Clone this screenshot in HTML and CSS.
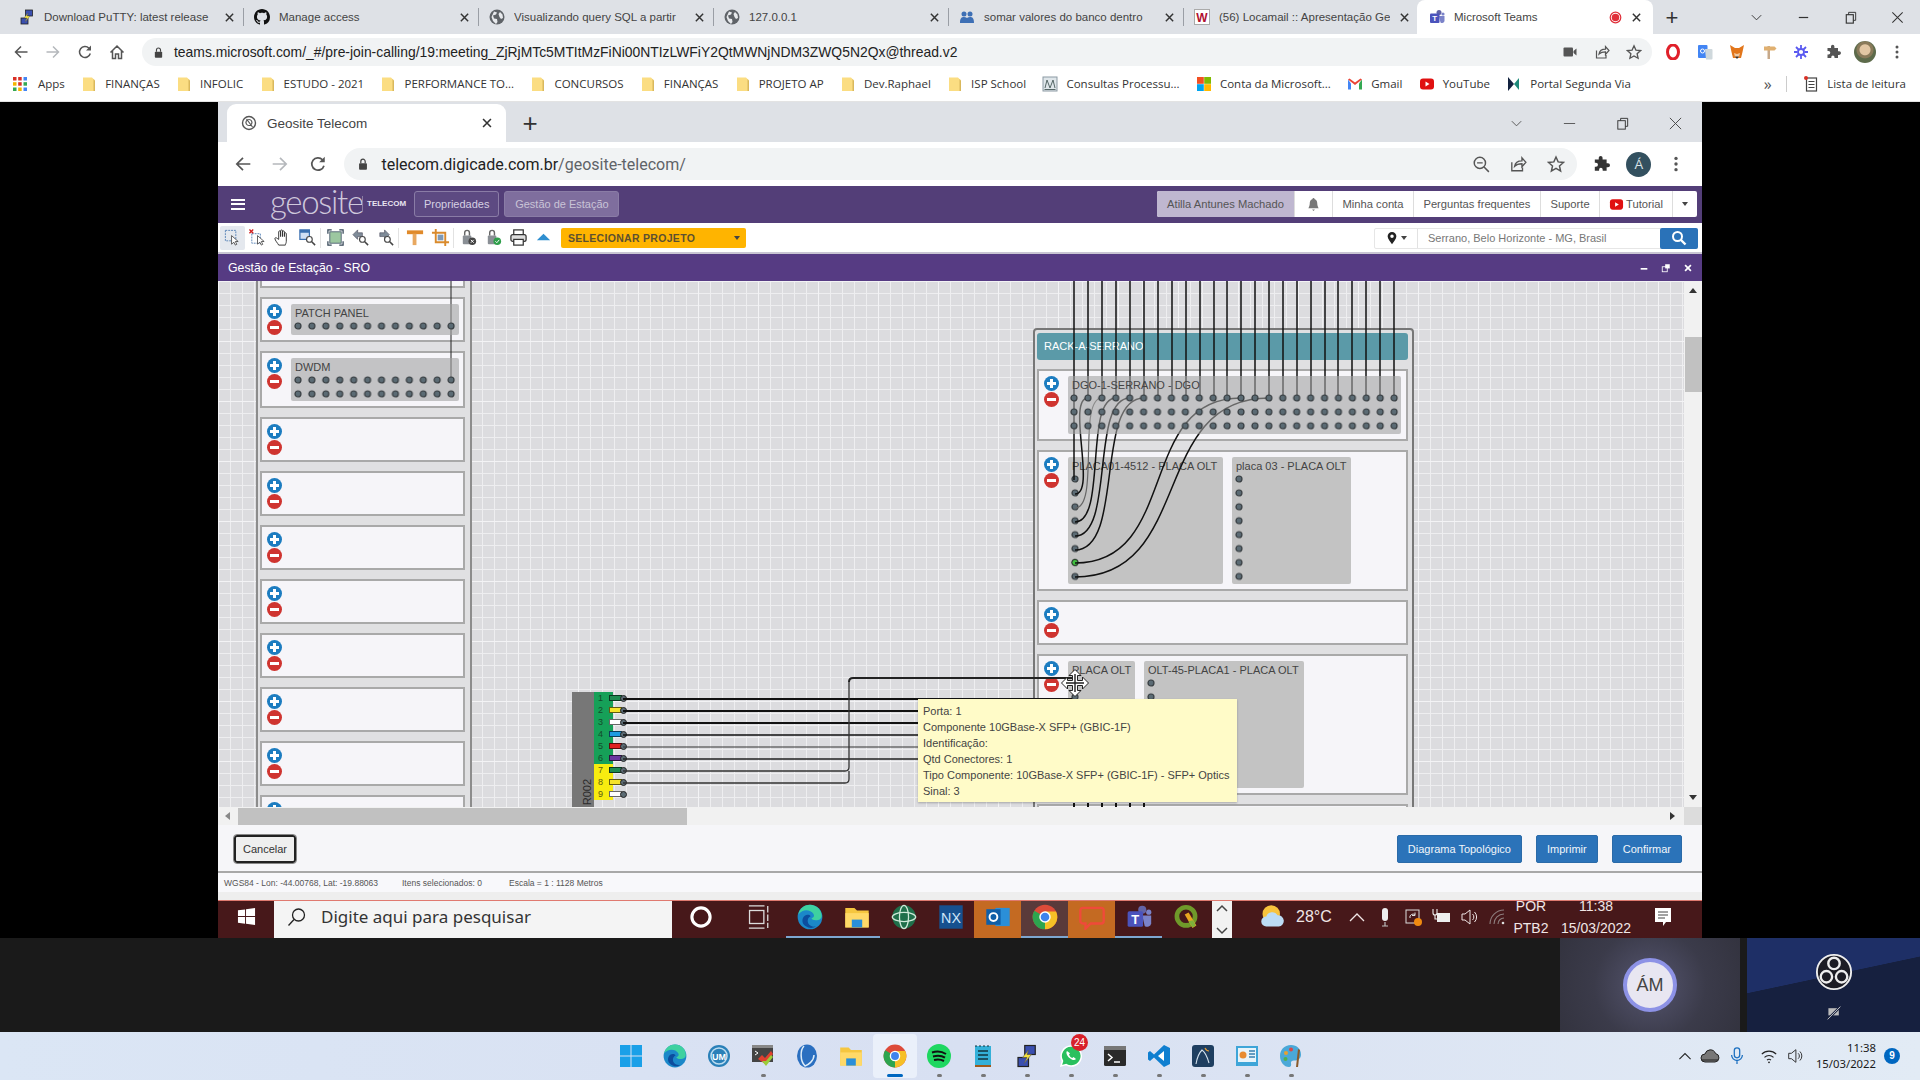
FILE: index.html
```html
<!DOCTYPE html>
<html lang="pt-BR">
<head>
  <meta charset="UTF-8">
  <meta name="viewport" content="width=device-width, initial-scale=1.0">
  <title>Geosite Telecom</title>
  <link rel="stylesheet" href="styles.css">
</head>
<body>
  <!-- pattern das portas: nao pode ficar em svg com display none -->
  <svg class="port-defs" xmlns="http://www.w3.org/2000/svg">
    <defs>
      <pattern id="port" width="13.92" height="13.92" patternUnits="userSpaceOnUse"><circle cx="6.96" cy="6.96" r="3" fill="#5b6b74" stroke="#33393d" stroke-width="1.2"/></pattern>
    </defs>
  </svg>

  <!-- icones -->
  <svg class="sprite" xmlns="http://www.w3.org/2000/svg">
    <symbol id="i-x" viewBox="0 0 16 16"><path d="M3.5 3.5l9 9M12.5 3.5l-9 9" fill="none" stroke="currentColor" stroke-width="1.8"/></symbol>
    <symbol id="i-back" viewBox="0 0 16 16"><path d="M14.5 8H2.5M8 2.5L2.5 8 8 13.5" fill="none" stroke="currentColor" stroke-width="1.5"/></symbol>
    <symbol id="i-fwd" viewBox="0 0 16 16"><path d="M1.5 8h12M8 2.5L13.5 8 8 13.5" fill="none" stroke="currentColor" stroke-width="1.5"/></symbol>
    <symbol id="i-reload" viewBox="0 0 16 16"><path d="M13.3 9.5A5.5 5.5 0 1 1 12 4.2" fill="none" stroke="currentColor" stroke-width="1.5"/><path d="M14 1.5V6.5H9z" fill="currentColor"/></symbol>
    <symbol id="i-home" viewBox="0 0 16 16"><path d="M1.5 8.5L8 2l6.5 6.5M3.5 7v7.5h3V10h3v4.500h3V7" fill="none" stroke="currentColor" stroke-width="1.5"/></symbol>
    <symbol id="i-lock" viewBox="0 0 16 16"><rect x="3.5" y="7" width="9" height="7.5" rx="1" fill="currentColor"/><path d="M5.5 7V5a2.5 2.5 0 0 1 5 0v2" fill="none" stroke="currentColor" stroke-width="1.4"/></symbol>
    <symbol id="i-cam" viewBox="0 0 16 16"><rect x="1.5" y="3.5" width="9.5" height="9" rx="1" fill="currentColor"/><path d="M11.5 7l3-2.5v7l-3-2.5z" fill="currentColor"/></symbol>
    <symbol id="i-share" viewBox="0 0 16 16"><path d="M2.5 6.5V14H12v-3M5 10c.5-3 3-4.800 6.5-4.800V2.500l3.500 4-3.500 4V7.800C8.500 7.800 6.500 8.500 5 10z" fill="none" stroke="currentColor" stroke-width="1.2"/></symbol>
    <symbol id="i-star" viewBox="0 0 16 16"><path d="M8 1.800l1.900 4.300 4.700.5-3.500 3.100 1 4.600L8 11.900l-4.100 2.400 1-4.600-3.500-3.100 4.700-.5z" fill="none" stroke="currentColor" stroke-width="1.3"/></symbol>
    <symbol id="i-puzzle" viewBox="0 0 16 16"><path d="M6 2.500a1.700 1.700 0 0 1 3.400 0V4H13v3.300h1.200a1.800 1.800 0 0 1 0 3.600H13V14H9.500v-1a1.600 1.600 0 0 0-3.200 0v1H2.500v-3.500h1a1.800 1.800 0 0 0 0-3.600h-1V4H6z" fill="currentColor"/></symbol>
    <symbol id="i-dots" viewBox="0 0 16 16"><circle cx="8" cy="3" r="1.5" fill="currentColor"/><circle cx="8" cy="8" r="1.5" fill="currentColor"/><circle cx="8" cy="13" r="1.5" fill="currentColor"/></symbol>
    <symbol id="i-zoomout" viewBox="0 0 16 16"><circle cx="7" cy="7" r="5" fill="none" stroke="currentColor" stroke-width="1.3"/><path d="M10.700 10.700L15 15M4.500 7h5" fill="none" stroke="currentColor" stroke-width="1.3"/></symbol>
    <symbol id="i-globe" viewBox="0 0 16 16"><circle cx="8" cy="8" r="7.5" fill="#5f6368"/><path d="M5 2.500l3 1-1 2-3 1 1 3 3 .5 .5 3-1.500 2L4 12 2.500 8zM11 3l2.500 2.500.5 3.500-2 1-1.500-2L9.500 5z" fill="#e8eaed"/></symbol>
    <symbol id="i-github" viewBox="0 0 16 16"><path d="M8 0C3.580 0 0 3.580 0 8c0 3.540 2.290 6.530 5.470 7.590.4.070.55-.17.55-.38 0-.19-.01-.82-.01-1.490-2.010.37-2.530-.49-2.690-.94-.09-.23-.48-.94-.82-1.130-.28-.15-.68-.52-.01-.53.63-.01 1.080.58 1.230.82.72 1.210 1.870.87 2.330.66.07-.52.28-.87.51-1.070-1.780-.2-3.640-.89-3.640-3.950 0-.87.31-1.590.82-2.150-.08-.2-.36-1.020.08-2.120 0 0 .67-.21 2.200.82.64-.18 1.320-.27 2-.27.68 0 1.360.09 2 .27 1.530-1.040 2.200-.82 2.200-.82.44 1.100.16 1.920.08 2.120.51.56.82 1.270.82 2.150 0 3.070-1.870 3.750-3.650 3.950.29.25.54.73.54 1.480 0 1.070-.01 1.930-.01 2.200 0 .21.15.46.55.38A8.013 8.013 0 0 0 16 8c0-4.420-3.580-8-8-8z" fill="#111"/></symbol>
    <symbol id="i-putty" viewBox="0 0 16 16"><rect x="6.5" y="1" width="7" height="6" fill="#3a4fb0" stroke="#222" stroke-width=".8"/><rect x="2" y="9" width="7" height="6" fill="#3a4fb0" stroke="#222" stroke-width=".8"/><path d="M9 4L5 9h3l-2 4 5-6H8z" fill="#f6e33a" stroke="#555" stroke-width=".4"/></symbol>
    <symbol id="i-people" viewBox="0 0 16 16"><circle cx="5" cy="5" r="2.5" fill="#3d6fb5"/><circle cx="11" cy="5" r="2.5" fill="#3d6fb5"/><path d="M1 14c0-5 1.500-6 4-6 1.200 0 2 .3 3 1 1-.7 1.800-1 3-1 2.500 0 4 1 4 6z" fill="#3d6fb5"/></symbol>
    <symbol id="i-locaweb" viewBox="0 0 16 16"><rect x=".5" y=".5" width="15" height="15" fill="#fff" stroke="#aaa"/><text x="8" y="12.5" font-family="Liberation Sans" font-size="12" font-weight="700" fill="#b01030" text-anchor="middle">W</text></symbol>
    <symbol id="i-teams" viewBox="0 0 16 16"><circle cx="10" cy="3.5" r="2.5" fill="#6264a7"/><circle cx="14" cy="5" r="1.6" fill="#7b83c9"/><path d="M10 7h5.500v5a2.500 2.500 0 0 1-4 1.500z" fill="#7b83c9"/><rect x="1" y="4.5" width="9.5" height="9.5" rx="1" fill="#4b53bc"/><text x="5.7" y="12" font-family="Liberation Sans" font-size="8" font-weight="700" fill="#fff" text-anchor="middle">T</text></symbol>
    <symbol id="i-rec" viewBox="0 0 16 16"><circle cx="8" cy="8" r="6.5" fill="#fff" stroke="#e0303a" stroke-width="1.5"/><circle cx="8" cy="8" r="4.6" fill="#e0303a"/></symbol>
    <symbol id="i-apps" viewBox="0 0 16 16"><g fill="#d93025"><rect x="1" y="1" width="3.5" height="3.5"/><rect x="6.2" y="1" width="3.5" height="3.5"/></g><rect x="11.5" y="1" width="3.5" height="3.5" fill="#4285f4"/><rect x="1" y="6.2" width="3.5" height="3.5" fill="#f4b400"/><rect x="6.2" y="6.2" width="3.5" height="3.5" fill="#d93025"/><rect x="11.5" y="6.2" width="3.5" height="3.5" fill="#34a853"/><rect x="1" y="11.5" width="3.5" height="3.5" fill="#34a853"/><rect x="6.2" y="11.5" width="3.5" height="3.5" fill="#f4b400"/><rect x="11.5" y="11.5" width="3.5" height="3.5" fill="#4285f4"/></symbol>
    <symbol id="i-folder" viewBox="0 0 16 16"><path d="M2 1.500h9l3 3V15H2z" fill="#fbdd82"/><path d="M12.500 3v12H14V4.500z" fill="#d9b85c"/></symbol>
    <symbol id="i-court" viewBox="0 0 16 16"><rect x="1" y="1" width="14" height="14" fill="#dfe6ea" stroke="#8c9aa3"/><path d="M3 12L5 4l3 8 3-8 2 8M2.500 13.500h11" fill="none" stroke="#566"/></symbol>
    <symbol id="i-ms" viewBox="0 0 16 16"><rect x="1" y="1" width="6.8" height="6.8" fill="#f25022"/><rect x="8.2" y="1" width="6.8" height="6.8" fill="#7fba00"/><rect x="1" y="8.2" width="6.8" height="6.8" fill="#00a4ef"/><rect x="8.2" y="8.2" width="6.8" height="6.8" fill="#ffb900"/></symbol>
    <symbol id="i-gmail" viewBox="0 0 16 16"><path d="M1 3.500v10h3V7.500z" fill="#4285f4"/><path d="M12 7.500v6h3v-10z" fill="#34a853"/><path d="M1 3.500L8 9l7-5.500-1.500-1L8 6.500 2.500 2.500z" fill="#ea4335"/></symbol>
    <symbol id="i-yt" viewBox="0 0 16 16"><rect x="1" y="2.5" width="14" height="11" rx="3" fill="#e01010"/><path d="M6.500 5.500v5l4-2.500z" fill="#fff"/></symbol>
    <symbol id="i-portal" viewBox="0 0 16 16"><path d="M2 1l6 7-6 7z" fill="#13223f"/><path d="M8 8l5-6v12z" fill="#1e8a7a"/></symbol>
    <symbol id="i-list" viewBox="0 0 16 16"><rect x="3.5" y="2" width="10" height="13" fill="none" stroke="#444" stroke-width="1.2"/><path d="M5.500 5.500h6M5.500 8.500h6M5.500 11.500h6" stroke="#444"/><circle cx="3" cy="2" r="2" fill="#d93025"/></symbol>
    <symbol id="i-opera" viewBox="0 0 16 16"><ellipse cx="8" cy="8" rx="5.5" ry="7" fill="none" stroke="#e0202a" stroke-width="3"/></symbol>
    <symbol id="i-trans" viewBox="0 0 16 16"><rect x="1" y="1" width="9.5" height="13" rx="1" fill="#4285f4"/><path d="M8 5h6.500a1 1 0 0 1 1 1v8.500a1 1 0 0 1-1 1H9z" fill="#cfd8dc"/><circle cx="5.5" cy="7" r="2" fill="none" stroke="#fff"/></symbol>
    <symbol id="i-fox" viewBox="0 0 16 16"><path d="M1 1l5 3h4l5-3-1.500 7L12 14H4L2.500 8z" fill="#e2761b"/><path d="M5 9l3 1 3-1-1 4H6z" fill="#f2c9a0"/><path d="M6 12.500h4L8 15z" fill="#333"/></symbol>
    <symbol id="i-post" viewBox="0 0 16 16"><rect x="6.5" y="2" width="2.5" height="13" fill="#c7a98a"/><path d="M3 2.500h10.500l2 2-2 2H3z" fill="#e0b070"/></symbol>
    <symbol id="i-burst" viewBox="0 0 16 16"><circle cx="8" cy="8" r="3" fill="none" stroke="#5a5af0" stroke-width="1.8"/><path d="M8 1v3.500M8 11.500V15M1 8h3.500M11.500 8H15M3 3l2.500 2.500M10.500 10.500L13 13M13 3l-2.500 2.500M5.500 10.500L3 13" stroke="#5a5af0" stroke-width="1.8"/></symbol>
    <symbol id="i-bell" viewBox="0 0 16 16"><path d="M8 1a1 1 0 0 1 1 1.200c2.300.6 3 2.600 3 4.800 0 2.500 1 4 1.500 5h-11c.5-1 1.500-2.500 1.500-5 0-2.200.7-4.200 3-4.800A1 1 0 0 1 8 1zM6.500 13.200h3L8 15z" fill="currentColor"/></symbol>
    <symbol id="i-pin" viewBox="0 0 16 16"><path fill-rule="evenodd" d="M8 1a5 5 0 0 1 5 5c0 3-3 6-5 9-2-3-5-6-5-9a5 5 0 0 1 5-5zm0 3a2 2 0 1 0 0 4 2 2 0 0 0 0-4z" fill="currentColor"/></symbol>
    <symbol id="i-search" viewBox="0 0 16 16"><circle cx="6.5" cy="6.5" r="4.5" fill="none" stroke="currentColor" stroke-width="2"/><path d="M10 10l4.500 4.500" stroke="currentColor" stroke-width="2.4"/></symbol>
    <symbol id="i-geo" viewBox="0 0 16 16"><circle cx="8" cy="8" r="6.5" fill="none" stroke="#555" stroke-width="1.4"/><path d="M5.500 4l6 8M8 4.500a3 3 0 1 1-.1 0" fill="none" stroke="#555" stroke-width="1.2"/></symbol>

    <symbol id="t-select" viewBox="0 0 20 20"><rect x="2.5" y="2.5" width="11" height="11" fill="none" stroke="#5b86b8" stroke-dasharray="2 1"/><path d="M9 8v9l2.500-2 1.500 3 1.500-.8-1.500-3h3z" fill="#fff" stroke="#333" stroke-width=".8"/></symbol>
    <symbol id="t-unselect" viewBox="0 0 20 20"><rect x="4" y="6" width="9" height="10" fill="none" stroke="#5b86b8" stroke-dasharray="2 1"/><path d="M1.500 1.500l4 4M5.500 1.500l-4 4" stroke="#d02020" stroke-width="1.4"/><path d="M10 8v9l2.500-2 1.500 3 1.500-.8-1.500-3h3z" fill="#fff" stroke="#333" stroke-width=".8"/></symbol>
    <symbol id="t-hand" viewBox="0 0 20 20"><path d="M6 18c-1-2-4-5-4-7 0-1 1.500-1 2.500 0L6 12V4c0-1.300 2-1.300 2 0v5-6c0-1.300 2-1.300 2 0v6-5c0-1.300 2-1.300 2 0v5-3c0-1.300 2-1.300 2 0v8c0 2-1 3-1 4z" fill="#fff" stroke="#333"/></symbol>
    <symbol id="t-zoomrect" viewBox="0 0 20 20"><rect x="2" y="2" width="10" height="10" fill="#cfe0f5" stroke="#3a70b0" stroke-width="1.3"/><rect x="2" y="2" width="10" height="3" fill="#3a70b0"/><circle cx="12" cy="12" r="3" fill="#fff" stroke="#444" stroke-width="1.2"/><path d="M14.500 14.500l3.500 3.500" stroke="#444" stroke-width="1.6"/></symbol>
    <symbol id="t-extent" viewBox="0 0 20 20"><rect x="4" y="4" width="12" height="12" fill="#9cc7a0" stroke="#567"/><path d="M2 6V2h4M14 2h4v4M18 14v4h-4M6 18H2v-4" fill="none" stroke="#345" stroke-width="1.3"/></symbol>
    <symbol id="t-prev" viewBox="0 0 20 20"><path d="M2 7l5-5v3h5v4H7v3z" fill="#7f8c99" stroke="#445" stroke-width=".6"/><circle cx="12" cy="12" r="3" fill="#fff" stroke="#444" stroke-width="1.2"/><path d="M14.500 14.500l3.500 3.500" stroke="#444" stroke-width="1.6"/></symbol>
    <symbol id="t-next" viewBox="0 0 20 20"><path d="M14 7L9 2v3H4v4h5v3z" fill="#7f8c99" stroke="#445" stroke-width=".6"/><circle cx="12" cy="12" r="3" fill="#fff" stroke="#444" stroke-width="1.2"/><path d="M14.500 14.500l3.500 3.500" stroke="#444" stroke-width="1.6"/></symbol>
    <symbol id="t-post" viewBox="0 0 20 20"><rect x="1" y="2.5" width="17" height="4" fill="#e08a2a"/><rect x="7" y="6" width="4" height="12" fill="#e8a860"/></symbol>
    <symbol id="t-crop" viewBox="0 0 20 20"><path d="M5 1v14h14M1 5h14v14" fill="none" stroke="#d98a2c" stroke-width="2"/><rect x="7" y="7" width="6" height="6" fill="#7f99b5"/></symbol>
    <symbol id="t-lockx" viewBox="0 0 20 20"><rect x="4" y="8" width="9" height="9" rx="1" fill="#8a8f95"/><path d="M6 8V5a2.500 2.500 0 0 1 5 0v3" fill="none" stroke="#666" stroke-width="1.5"/><circle cx="14" cy="14" r="4" fill="#444"/><path d="M12.500 12.500l3 3M15.500 12.500l-3 3" stroke="#fff"/></symbol>
    <symbol id="t-lockok" viewBox="0 0 20 20"><rect x="4" y="8" width="9" height="9" rx="1" fill="#8a8f95"/><path d="M6 8V5a2.500 2.500 0 0 1 5 0v3" fill="none" stroke="#666" stroke-width="1.5"/><circle cx="14" cy="14" r="4" fill="#2e9e4a"/><path d="M12 14l1.500 1.500 2.500-3" fill="none" stroke="#fff"/></symbol>
    <symbol id="t-print" viewBox="0 0 20 20"><rect x="5" y="2" width="10" height="5" fill="#fff" stroke="#333" stroke-width="1.3"/><rect x="2" y="7" width="16" height="7" rx="2" fill="#ddd" stroke="#333" stroke-width="1.3"/><rect x="5" y="12" width="10" height="6" fill="#fff" stroke="#333" stroke-width="1.3"/></symbol>
    <symbol id="t-up" viewBox="0 0 20 20"><path d="M10 6l7 7H3z" fill="#2f8fd0"/></symbol>

    <symbol id="w-logo" viewBox="0 0 20 20"><path d="M1 3.500l7.500-1V9.500H1zM9.500 2.300L19 1v8.500H9.500zM1 10.500h7.500v7L1 16.500zM9.500 10.500H19V19l-9.500-1.300z" fill="currentColor"/></symbol>
    <symbol id="w-glass" viewBox="0 0 20 20"><circle cx="11.5" cy="8" r="6" fill="none" stroke="#222" stroke-width="1.3"/><path d="M7 12.500L1.500 18.500" stroke="#222" stroke-width="1.3"/></symbol>
    <symbol id="w-cortana" viewBox="0 0 20 20"><circle cx="10" cy="10" r="7" fill="none" stroke="#fff" stroke-width="2.4"/></symbol>
    <symbol id="w-task" viewBox="0 0 20 20"><path d="M3 1.500h12M3 18.500h12" stroke="#ddd"/><rect x="3.5" y="5" width="11" height="10" fill="none" stroke="#ddd"/><path d="M17.500 1.500v5M17.500 8v5M17.500 14.500v4" stroke="#ddd"/></symbol>
    <symbol id="w-edge" viewBox="0 0 20 20"><circle cx="10" cy="10" r="9.5" fill="#1b88c9"/><path d="M1 8C2 3 6 .5 10 .5c5 0 9 4 9 8.500 0 2.500-2 3.500-4.500 3.500-2 0-3-.6-3.400-1.500 2-.5 2.500-2 1.500-3.500C11 5 7 4 4 5.500 2.700 6.200 1.700 7 1 8z" fill="#3ed1a0"/><path d="M6.500 17c-3-2-3-6-.5-8 1.500-1 3.500-1 4.500.5-2.500 1-3 4.500-1 6.500 1.200 1.200 3 1.800 5 1.200-2.500 2-5.500 1.500-8-.2z" fill="#0c4d9e"/></symbol>
    <symbol id="w-files" viewBox="0 0 20 20"><path d="M1 3h7l2 2h9v13H1z" fill="#f5c63f"/><rect x="1" y="7" width="18" height="11" fill="#ffd968"/><rect x="6" y="12" width="8" height="6" fill="#2a8fd8"/></symbol>
    <symbol id="w-globe2" viewBox="0 0 20 20"><circle cx="10" cy="10" r="9" fill="#1f6f4a"/><ellipse cx="10" cy="10" rx="9" ry="3.5" fill="none" stroke="#cfe8d8"/><ellipse cx="10" cy="10" rx="3.5" ry="9" fill="none" stroke="#cfe8d8"/></symbol>
    <symbol id="w-nx" viewBox="0 0 20 20"><rect x="1" y="1" width="18" height="18" fill="#16508f"/><text x="10" y="14.5" font-family="Liberation Sans" font-size="11" fill="#cfe6fa" text-anchor="middle">NX</text></symbol>
    <symbol id="w-outlook" viewBox="0 0 20 20"><rect x="8" y="3" width="11" height="14" fill="#2b8fd8"/><rect x="1" y="4" width="11" height="12" fill="#0f5fa8"/><circle cx="6.5" cy="10" r="3" fill="none" stroke="#fff" stroke-width="1.5"/></symbol>
    <symbol id="w-chrome" viewBox="0 0 20 20"><circle cx="10" cy="10" r="9.5" fill="#dd4b39"/><path d="M10 10L1.800 5.200A9.500 9.500 0 0 0 10 19.500z" fill="#2da54f"/><path d="M10 10v9.500A9.500 9.500 0 0 0 18.500 5.800H10z" fill="#f6c026"/><circle cx="10" cy="10" r="4.4" fill="#fff"/><circle cx="10" cy="10" r="3.3" fill="#3f83ec"/></symbol>
    <symbol id="w-chat" viewBox="0 0 20 20"><path d="M3 3h14a2 2 0 0 1 2 2v8a2 2 0 0 1-2 2H9l-4 4v-4H3a2 2 0 0 1-2-2V5a2 2 0 0 1 2-2z" fill="none" stroke="#ef4a3a" stroke-width="1.8"/></symbol>
    <symbol id="w-qgis" viewBox="0 0 20 20"><circle cx="10" cy="9.5" r="7" fill="none" stroke="#6f9a2a" stroke-width="3.6"/><path d="M9 8l3-1.500 6 10-3 2z" fill="#e8a620"/><path d="M12 13l3 5 2.500-1.500-2-4z" fill="#7fb03a"/></symbol>
    <symbol id="w-cloud" viewBox="0 0 20 20"><circle cx="9" cy="8" r="7" fill="#f7c33d"/><path d="M5 18a4 4 0 0 1 0-8 5 5 0 0 1 9-1 4.500 4.500 0 0 1 1 9z" fill="#bcdcf5"/></symbol>
    <symbol id="w-caret" viewBox="0 0 20 20"><path d="M3 14l7-7 7 7" fill="none" stroke="currentColor" stroke-width="1.3"/></symbol>
    <symbol id="w-mic" viewBox="0 0 20 20"><rect x="7" y="1" width="6" height="13" rx="3" fill="#eee"/><path d="M10 15v4M7 19h6" stroke="#bbb" stroke-width="1.2"/></symbol>
    <symbol id="w-sync" viewBox="0 0 20 20"><rect x="3" y="3" width="13" height="13" fill="none" stroke="#ddd"/><path d="M7 11a3 3 0 0 1 5-3M12 5.500v3H9" fill="none" stroke="#ddd"/><circle cx="15" cy="15" r="4" fill="#f08a10"/></symbol>
    <symbol id="w-power" viewBox="0 0 20 20"><rect x="6" y="6" width="13" height="9" fill="#eee"/><path d="M2 2v4a2 2 0 0 0 4 0V2M4 8v4h3" fill="none" stroke="#eee" stroke-width="1.1"/></symbol>
    <symbol id="w-vol" viewBox="0 0 20 20"><path d="M3 7h3l5-4v14l-5-4H3z" fill="none" stroke="currentColor"/><path d="M13.500 7a4 4 0 0 1 0 6M15.500 5a7 7 0 0 1 0 10" fill="none" stroke="currentColor"/></symbol>
    <symbol id="w-wifi" viewBox="0 0 20 20"><path d="M2 8a11 11 0 0 1 16 0M5 11.500a7 7 0 0 1 10 0M7.800 14.500a3 3 0 0 1 4.400 0" fill="none" stroke="currentColor" stroke-width="1.2"/><circle cx="10" cy="17" r="1" fill="currentColor"/></symbol>
    <symbol id="w-dim" viewBox="0 0 20 20"><path d="M3 17a14 14 0 0 1 14-14M7 17a10 10 0 0 1 10-10M11 17a6 6 0 0 1 6-6" fill="none" stroke="#8d7d7d" stroke-width="1.1"/><circle cx="16" cy="16" r="1.3" fill="#ddd"/></symbol>
    <symbol id="w-note" viewBox="0 0 20 20"><path d="M2 1h16v14h-5l-3 4v-4H2z" fill="#fff"/><path d="M5 5h10M5 8h10M5 11h7" stroke="#444"/></symbol>

    <symbol id="a-start" viewBox="0 0 24 24"><path d="M1 1h10.500v10.500H1zM12.500 1H23v10.500H12.500zM1 12.500h10.500V23H1zM12.500 12.500H23V23H12.500z" fill="#1aa0e8"/></symbol>
    <symbol id="a-um" viewBox="0 0 24 24"><circle cx="12" cy="12" r="11" fill="#2a80b8"/><circle cx="12" cy="12" r="8" fill="none" stroke="#bcdcf0" stroke-width="1.5"/><text x="12" y="15.5" font-family="Liberation Sans" font-size="9" font-weight="700" fill="#fff" text-anchor="middle">UM</text></symbol>
    <symbol id="a-cmdc" viewBox="0 0 24 24"><rect x="1" y="1" width="21" height="17" fill="#444"/><rect x="1" y="1" width="21" height="3" fill="#888"/><path d="M4 7l3 2-3 2" fill="none" stroke="#fff"/><path d="M7 15l4-4 3 3 6-7 2 3-8 10z" fill="#e04030"/><path d="M11 17l4 5 7-9-2-2-5 6z" fill="#9ccc3a"/></symbol>
    <symbol id="a-wbox" viewBox="0 0 24 24"><ellipse cx="12" cy="12" rx="10" ry="11.5" fill="#2a6fc0"/><path d="M9 2C5 6 5 17 10 22c3-1 9-5 9-11" fill="none" stroke="#dcecf8" stroke-width="1.5"/></symbol>
    <symbol id="a-spot" viewBox="0 0 24 24"><circle cx="12" cy="12" r="12" fill="#1ed760"/><path d="M5 8.500c5-1.500 10-1 14 1.500M6 12.500c4-1 9-.7 12 1.200M7 16c3.500-.8 7-.6 10 1" fill="none" stroke="#111" stroke-width="2"/></symbol>
    <symbol id="a-notes" viewBox="0 0 24 24"><rect x="4" y="2" width="16" height="20" fill="#34b0d8"/><path d="M7 7h10M7 11h10M7 15h10" stroke="#12343f" stroke-width="1.5"/><path d="M5 1v2M9 1v2M13 1v2M17 1v2" stroke="#12343f"/><rect x="4" y="21" width="16" height="2" fill="#a05a1a"/></symbol>
    <symbol id="a-wapp" viewBox="0 0 24 24"><path d="M12 2a10 10 0 0 0-8.500 15L2 22l5.200-1.400A10 10 0 1 0 12 2z" fill="#29c05e" stroke="#fff" stroke-width="1.5"/><path d="M8 7c-1.500 1.500 0 5 2.500 7s5 3 6.500 1l-2.500-2-1.200 1c-1.500-.5-2.800-2-3.300-3.500l1-1.200z" fill="#fff"/></symbol>
    <symbol id="a-term" viewBox="0 0 24 24"><rect x="1" y="2" width="22" height="20" rx="1.5" fill="#2a2a2a"/><rect x="1" y="2" width="22" height="4" fill="#777"/><path d="M5 10l4 3.500-4 3.500" fill="none" stroke="#fff" stroke-width="1.5"/><path d="M11 18h6" stroke="#fff" stroke-width="1.5"/></symbol>
    <symbol id="a-vscode" viewBox="0 0 24 24"><path d="M17 1l6 3v16l-6 3-10-9.500L3 17l-2-1.500v-7L3 7l4 3.500z" fill="#0f7fd0"/><path d="M17 7l-6 5 6 5z" fill="#fff"/></symbol>
    <symbol id="a-mysql" viewBox="0 0 24 24"><rect x="1" y="1" width="22" height="22" rx="3" fill="#1f3f60"/><path d="M5 20c1-6 2-10 6-14 3 2 5 6 7 13" fill="none" stroke="#d4e2ee" stroke-width="1.1"/><path d="M14 4c1 2 3 3 4 3" fill="none" stroke="#f0a030" stroke-width="1.2"/></symbol>
    <symbol id="a-chart" viewBox="0 0 24 24"><rect x="1" y="2" width="22" height="20" fill="#3ea5d8"/><rect x="3" y="4" width="18" height="14" fill="#e8f4fa"/><circle cx="8" cy="11" r="3.5" fill="#e88c30"/><path d="M14 7h6M14 10h6M14 13h6" stroke="#3a7fb0" stroke-width="1.5"/></symbol>
    <symbol id="a-paint" viewBox="0 0 24 24"><path d="M12 1C5 1 1 6 1 12c0 6 4 11 9 11 2 0 2.500-2 2-3.500-.5-2 1-3 3-3 4 0 7-2 7-6C22 5 18 1 12 1z" fill="#4aa8d8"/><circle cx="7" cy="9" r="2" fill="#e8a030"/><circle cx="12" cy="5.500" r="2" fill="#d84848"/><circle cx="6.500" cy="15" r="2" fill="#50b050"/><path d="M19 5l2 1-2 17h-2z" fill="#8a5a2a"/></symbol>
    <symbol id="a-cloud" viewBox="0 0 20 20"><path d="M5 16a4 4 0 0 1 0-8 5.500 5.500 0 0 1 10.500-.5A4.300 4.300 0 0 1 15 16z" fill="#777" stroke="#222"/><path d="M2 14h16" stroke="#222"/></symbol>
    <symbol id="a-mic" viewBox="0 0 20 20"><rect x="7" y="1" width="6" height="11" rx="3" fill="none" stroke="#1b6fc0" stroke-width="1.4"/><path d="M4 9a6 6 0 0 0 12 0M10 15v4" fill="none" stroke="#1b6fc0" stroke-width="1.4"/></symbol>
  </svg>

  <div class="tabs">
    <div class="tab"><svg class="ico"><use href="#i-putty"/></svg><span class="tab-title">Download PuTTY: latest release</span><svg class="tab-x"><use href="#i-x"/></svg></div>
    <div class="tab"><svg class="ico"><use href="#i-github"/></svg><span class="tab-title">Manage access</span><svg class="tab-x"><use href="#i-x"/></svg></div>
    <div class="tab"><svg class="ico"><use href="#i-globe"/></svg><span class="tab-title">Visualizando query SQL a partir</span><svg class="tab-x"><use href="#i-x"/></svg></div>
    <div class="tab"><svg class="ico"><use href="#i-globe"/></svg><span class="tab-title">127.0.0.1</span><svg class="tab-x"><use href="#i-x"/></svg></div>
    <div class="tab"><svg class="ico"><use href="#i-people"/></svg><span class="tab-title">somar valores do banco dentro</span><svg class="tab-x"><use href="#i-x"/></svg></div>
    <div class="tab tab-last"><svg class="ico"><use href="#i-locaweb"/></svg><span class="tab-title">(56) Locamail :: Apresentação Ge</span><svg class="tab-x"><use href="#i-x"/></svg></div>
    <div class="tab tab-on"><svg class="ico"><use href="#i-teams"/></svg><span class="tab-title">Microsoft Teams</span><svg class="ico tab-rec"><use href="#i-rec"/></svg><svg class="tab-x"><use href="#i-x"/></svg></div>
    <span class="tab-plus">+</span>
    <div class="win-ctl">
      <svg viewBox="0 0 16 16"><path d="M3 5.500l5 5 5-5" fill="none" stroke="#333"/></svg>
      <svg viewBox="0 0 16 16"><path d="M3 8h10" stroke="#333" stroke-width="1.3"/></svg>
      <svg viewBox="0 0 16 16"><rect x="3.5" y="5" width="7.5" height="9" fill="none" stroke="#333" stroke-width="1.2"/><path d="M6 5V2.500h7.500V11H11" fill="none" stroke="#333"/></svg>
      <svg viewBox="0 0 16 16"><path d="M2.500 2.500l11 11M13.500 2.500l-11 11" stroke="#333" stroke-width="1.1"/></svg>
    </div>
  </div>

  <div class="toolbar">
    <div class="nav-btn"><svg><use href="#i-back"/></svg></div>
    <div class="nav-btn nav-off"><svg><use href="#i-fwd"/></svg></div>
    <div class="nav-btn"><svg><use href="#i-reload"/></svg></div>
    <div class="nav-btn"><svg><use href="#i-home"/></svg></div>
    <div class="omni">
      <svg class="ico omni-lock"><use href="#i-lock"/></svg>
      <span class="omni-url">teams.microsoft.com/_#/pre-join-calling/19:meeting_ZjRjMTc5MTItMzFiNi00NTIzLWFiY2QtMWNjNDM3ZWQ5N2Qx@thread.v2</span>
      <div class="nav-btn"><svg><use href="#i-cam"/></svg></div>
      <div class="nav-btn"><svg><use href="#i-share"/></svg></div>
      <div class="nav-btn"><svg><use href="#i-star"/></svg></div>
    </div>
    <div class="ext-list">
      <div class="nav-btn"><svg><use href="#i-opera"/></svg></div>
      <div class="nav-btn"><svg><use href="#i-trans"/></svg></div>
      <div class="nav-btn"><svg><use href="#i-fox"/></svg></div>
      <div class="nav-btn"><svg><use href="#i-post"/></svg></div>
      <div class="nav-btn"><svg><use href="#i-burst"/></svg></div>
      <div class="nav-btn"><svg><use href="#i-puzzle"/></svg></div>
      <div class="nav-btn"><span class="avatar-photo"></span></div>
      <div class="nav-btn"><svg><use href="#i-dots"/></svg></div>
    </div>
  </div>

  <div class="bookmarks">
    <a class="bm bm-apps"><svg class="ico"><use href="#i-apps"/></svg>Apps</a>
    <a class="bm"><svg class="ico"><use href="#i-folder"/></svg>FINANÇAS</a>
    <a class="bm"><svg class="ico"><use href="#i-folder"/></svg>INFOLIC</a>
    <a class="bm"><svg class="ico"><use href="#i-folder"/></svg>ESTUDO - 2021</a>
    <a class="bm"><svg class="ico"><use href="#i-folder"/></svg>PERFORMANCE TO...</a>
    <a class="bm"><svg class="ico"><use href="#i-folder"/></svg>CONCURSOS</a>
    <a class="bm"><svg class="ico"><use href="#i-folder"/></svg>FINANÇAS</a>
    <a class="bm"><svg class="ico"><use href="#i-folder"/></svg>PROJETO AP</a>
    <a class="bm"><svg class="ico"><use href="#i-folder"/></svg>Dev.Raphael</a>
    <a class="bm"><svg class="ico"><use href="#i-folder"/></svg>ISP School</a>
    <a class="bm"><svg class="ico"><use href="#i-court"/></svg>Consultas Processu...</a>
    <a class="bm"><svg class="ico"><use href="#i-ms"/></svg>Conta da Microsoft...</a>
    <a class="bm"><svg class="ico"><use href="#i-gmail"/></svg>Gmail</a>
    <a class="bm"><svg class="ico"><use href="#i-yt"/></svg>YouTube</a>
    <a class="bm"><svg class="ico"><use href="#i-portal"/></svg>Portal Segunda Via</a>
    <span class="bm-more">»</span>
    <a class="bm bm-list"><svg class="ico"><use href="#i-list"/></svg>Lista de leitura</a>
  </div>

  <div class="desk">
    <div class="window">
      <div class="wtabs">
        <div class="wtab"><svg class="ico"><use href="#i-geo"/></svg><span class="wtab-title">Geosite Telecom</span><svg class="wtab-x"><use href="#i-x"/></svg></div>
        <span class="wtab-plus">+</span>
        <div class="win-ctl win-ctl-in">
          <svg viewBox="0 0 16 16"><path d="M3 5.500l5 5 5-5" fill="none" stroke="#555"/></svg>
          <svg viewBox="0 0 16 16"><path d="M2 8h12" stroke="#555"/></svg>
          <svg viewBox="0 0 16 16"><rect x="3" y="5" width="8" height="9" fill="none" stroke="#333"/><path d="M6 5V2.500h7.500V11H11" fill="none" stroke="#333"/></svg>
          <svg viewBox="0 0 16 16"><path d="M2 2l12 12M14 2L2 14" stroke="#444"/></svg>
        </div>
      </div>
      <div class="wbar">
        <div class="wnav"><svg><use href="#i-back"/></svg></div>
        <div class="wnav wnav-off"><svg><use href="#i-fwd"/></svg></div>
        <div class="wnav"><svg><use href="#i-reload"/></svg></div>
        <div class="womni">
          <svg class="ico womni-lock"><use href="#i-lock"/></svg>
          <span class="womni-url">telecom.digicade.com.br<span class="womni-path">/geosite-telecom/</span></span>
          <div class="wnav"><svg><use href="#i-zoomout"/></svg></div>
          <div class="wnav"><svg><use href="#i-share"/></svg></div>
          <div class="wnav"><svg><use href="#i-star"/></svg></div>
        </div>
        <div class="wnav wnav-dark"><svg><use href="#i-puzzle"/></svg></div>
        <div class="wnav"><span class="avatar">Á</span></div>
        <div class="wnav"><svg><use href="#i-dots"/></svg></div>
      </div>

      <header class="app-head">
        <span class="burger"></span>
        <span class="logo">geosite</span>
        <span class="logo-sub">TELECOM</span>
        <button class="head-btn">Propriedades</button>
        <button class="head-btn head-btn-on">Gestão de Estação</button>
        <nav class="head-menu">
          <span class="hm hm-user">Atilla Antunes Machado</span>
          <span class="hm hm-bell"><svg class="ico"><use href="#i-bell"/></svg></span>
          <span class="hm">Minha conta</span>
          <span class="hm">Perguntas frequentes</span>
          <span class="hm">Suporte</span>
          <span class="hm hm-tut"><svg class="ico"><use href="#i-yt"/></svg>Tutorial</span>
          <span class="hm hm-caret"><i class="caret"></i></span>
        </nav>
      </header>

      <div class="tools">
        <span class="tool tool-on"><svg><use href="#t-select"/></svg></span>
        <span class="tool"><svg><use href="#t-unselect"/></svg></span>
        <span class="tool"><svg><use href="#t-hand"/></svg></span>
        <span class="tool"><svg><use href="#t-zoomrect"/></svg></span>
        <span class="tool-sep"></span>
        <span class="tool"><svg><use href="#t-extent"/></svg></span>
        <span class="tool"><svg><use href="#t-prev"/></svg></span>
        <span class="tool"><svg><use href="#t-next"/></svg></span>
        <span class="tool-sep tool-sep-w"></span>
        <span class="tool"><svg><use href="#t-post"/></svg></span>
        <span class="tool"><svg><use href="#t-crop"/></svg></span>
        <span class="tool-sep"></span>
        <span class="tool"><svg><use href="#t-lockx"/></svg></span>
        <span class="tool"><svg><use href="#t-lockok"/></svg></span>
        <span class="tool"><svg><use href="#t-print"/></svg></span>
        <span class="tool"><svg><use href="#t-up"/></svg></span>
        <button class="project">SELECIONAR PROJETO<i class="caret"></i></button>
        <div class="finder">
          <span class="finder-pin"><svg class="ico"><use href="#i-pin"/></svg><i class="caret"></i></span>
          <span class="finder-text">Serrano, Belo Horizonte - MG, Brasil</span>
          <span class="finder-go"><svg class="ico"><use href="#i-search"/></svg></span>
        </div>
      </div>

      <div class="titlebar">
        <span>Gestão de Estação - SRO</span>
        <div class="titlebar-ctl">
          <svg viewBox="0 0 12 12"><path d="M2 7h8" stroke="#fff" stroke-width="2"/></svg>
          <svg viewBox="0 0 12 12"><rect x="1.5" y="4.5" width="6" height="6" fill="none" stroke="#fff"/><rect x="5" y="1.5" width="5.5" height="5" fill="#fff"/></svg>
          <svg viewBox="0 0 12 12"><path d="M2.500 2.500l7 7M9.500 2.500l-7 7" stroke="#fff" stroke-width="2"/></svg>
        </div>
      </div>

      <div class="pane">
        <div class="canvas">
          <!-- rack da esquerda -->
          <div class="rack rack-left">
            <div class="unit"><div class="ctl"><i class="btn-add"></i><i class="btn-del"></i></div></div>
            <div class="unit"><div class="ctl"><i class="btn-add"></i><i class="btn-del"></i></div>
              <div class="card card-glass"><div class="card-label">PATCH PANEL</div><svg class="ports" width="168" height="14"><rect width="168" height="14" fill="url(#port)"/></svg></div>
            </div>
            <div class="unit unit-dwdm"><div class="ctl"><i class="btn-add"></i><i class="btn-del"></i></div>
              <div class="card card-glass"><div class="card-label">DWDM</div><svg class="ports" width="168" height="28"><rect width="168" height="28" fill="url(#port)"/></svg></div>
            </div>
            <div class="unit"><div class="ctl"><i class="btn-add"></i><i class="btn-del"></i></div></div>
            <div class="unit"><div class="ctl"><i class="btn-add"></i><i class="btn-del"></i></div></div>
            <div class="unit"><div class="ctl"><i class="btn-add"></i><i class="btn-del"></i></div></div>
            <div class="unit"><div class="ctl"><i class="btn-add"></i><i class="btn-del"></i></div></div>
            <div class="unit"><div class="ctl"><i class="btn-add"></i><i class="btn-del"></i></div></div>
            <div class="unit"><div class="ctl"><i class="btn-add"></i><i class="btn-del"></i></div></div>
            <div class="unit"><div class="ctl"><i class="btn-add"></i><i class="btn-del"></i></div></div>
            <div class="unit"><div class="ctl"><i class="btn-add"></i><i class="btn-del"></i></div></div>
          </div>

          <!-- rack da direita -->
          <div class="rack rack-right">
            <div class="rack-title">RACK-A-SERRANO</div>
            <div class="unit unit-dgo"><div class="ctl"><i class="btn-add"></i><i class="btn-del"></i></div>
              <div class="card card-glass card-dgo"><div class="card-label">DGO-1-SERRANO - DGO</div><svg class="ports ports-dgo" width="334" height="42"><rect width="334" height="42" fill="url(#port)"/></svg></div>
            </div>
            <div class="unit unit-olt"><div class="ctl"><i class="btn-add"></i><i class="btn-del"></i></div>
              <div class="card card-a"><div class="card-label">PLACA01-4512 - PLACA OLT</div><svg class="ports" width="14" height="112"><rect width="14" height="112" fill="url(#port)"/><circle cx="6.96" cy="90.48" r="3" fill="#3fc03f" stroke="#2a3a2a"/></svg></div>
              <div class="card card-b"><div class="card-label">placa 03 - PLACA OLT</div><svg class="ports" width="14" height="112"><rect width="14" height="112" fill="url(#port)"/></svg></div>
            </div>
            <div class="unit"><div class="ctl"><i class="btn-add"></i><i class="btn-del"></i></div></div>
            <div class="unit unit-olt"><div class="ctl"><i class="btn-add"></i><i class="btn-del"></i></div>
              <div class="card card-c"><div class="card-label">PLACA OLT</div><svg class="ports" width="14" height="112"><rect width="14" height="112" fill="url(#port)"/></svg></div>
              <div class="card card-d"><div class="card-label">OLT-45-PLACA1 - PLACA OLT</div><svg class="ports" width="14" height="112"><rect width="14" height="112" fill="url(#port)"/></svg></div>
            </div>
            <div class="unit"></div>
          </div>

          <!-- DIO -->
          <div class="dio">
            <div class="dio-name"><span>R002</span></div>
            <div class="dio-rows">
              <div class="dio-row"><span class="dio-num">1</span><i class="conn c-green"></i><i class="conn-dot"></i></div>
              <div class="dio-row"><span class="dio-num">2</span><i class="conn c-yellow"></i><i class="conn-dot"></i></div>
              <div class="dio-row"><span class="dio-num">3</span><i class="conn c-white"></i><i class="conn-dot"></i></div>
              <div class="dio-row"><span class="dio-num">4</span><i class="conn c-blue"></i><i class="conn-dot"></i></div>
              <div class="dio-row"><span class="dio-num">5</span><i class="conn c-red"></i><i class="conn-dot"></i></div>
              <div class="dio-row"><span class="dio-num">6</span><i class="conn c-purple"></i><i class="conn-dot"></i></div>
              <div class="dio-row dio-row-y"><span class="dio-num">7</span><i class="conn c-green"></i><i class="conn-dot"></i></div>
              <div class="dio-row dio-row-y"><span class="dio-num">8</span><i class="conn c-yellow"></i><i class="conn-dot"></i></div>
              <div class="dio-row dio-row-y"><span class="dio-num">9</span><i class="conn c-white"></i><i class="conn-dot"></i></div>
            </div>
          </div>

          <!-- cabos -->
          <svg class="wires" viewBox="218 281 1466 526">
            <g fill="none" stroke="#111" stroke-width="1.5">
              <path d="M451 281V379" stroke="#222" stroke-width="1"/>
              <path d="M1074 281V480"/>
              <path d="M1088 281V398"/><path d="M1102 281V398"/><path d="M1116 281V398"/><path d="M1130 281V398"/><path d="M1144 281V398"/>
              <path d="M1158 281V398"/><path d="M1172 281V398"/><path d="M1186 281V398"/><path d="M1200 281V398"/><path d="M1214 281V398"/><path d="M1227 281V398"/>
              <path d="M1241 281V398"/><path d="M1255 281V398"/><path d="M1269 281V398"/><path d="M1283 281V398"/><path d="M1297 281V398"/><path d="M1311 281V398"/>
              <path d="M1325 281V398"/><path d="M1338 281V398"/><path d="M1352 281V398"/><path d="M1366 281V398"/><path d="M1380 281V398"/><path d="M1394 281V398"/>
              <path d="M1075 494C1097 494 1066 398 1088 398"/>
              <path d="M1075 508C1100 508 1077 398 1102 398" stroke="#666" stroke-width="1.2"/>
              <path d="M1075 522C1107 522 1084 398 1116 398"/>
              <path d="M1075 536C1115 536 1090 398 1130 398"/>
              <path d="M1075 550C1125 550 1094 398 1144 398"/>
              <path d="M1075 563C1180 563 1136 398 1241 398"/>
              <path d="M1075 577C1195 577 1149 398 1269 398"/>
              <path d="M623 699H1072" stroke-width="2"/>
              <path d="M623 711H920" stroke-width="2"/>
              <path d="M623 723H920" stroke-width="2"/>
              <path d="M623 735H920"/>
              <path d="M623 747H920" stroke="#333" stroke-width="1.2"/>
              <path d="M623 759H920" stroke="#222"/>
              <path d="M623 771H845q4 0 4-4V682" stroke="#333" stroke-width="1.3"/>
              <path d="M623 783H845q4 0 4-4V771" stroke="#333" stroke-width="1.3"/>
              <path d="M849 682q0-4 4-4H1072" stroke="#222" stroke-width="2"/>
              <path d="M1074 803V807M1088 803V807M1102 803V807M1116 803V807M1130 803V807M1144 803V807" stroke-width="2"/>
            </g>
          </svg>

          <div class="tip">
            <div>Porta: 1</div>
            <div>Componente 10GBase-X SFP+ (GBIC-1F)</div>
            <div>Identificação:</div>
            <div>Qtd Conectores: 1</div>
            <div>Tipo Componente: 10GBase-X SFP+ (GBIC-1F) - SFP+ Optics</div>
            <div>Sinal: 3</div>
          </div>

          <svg class="cursor" viewBox="0 0 28 28"><path d="M14 .5L20 6.500H16.500V11.500H21.500V8L27.500 14 21.500 20V16.500H16.500V21.500H20L14 27.500 8 21.500H11.500V16.500H6.500V20L.5 14 6.500 8V11.500H11.500V6.500H8z" fill="#fff" stroke="#222"/><path d="M14 5v18M5 14h18" stroke="#222" stroke-width="1.4"/></svg>
        </div>

        <div class="vbar"><i class="arr arr-up"></i><div class="vthumb"></div><i class="arr arr-down"></i></div>
        <div class="hbar"><i class="arr arr-left"></i><div class="hthumb"></div><i class="arr arr-right"></i></div>
        <div class="corner"></div>
      </div>

      <footer class="foot">
        <button class="btn-cancel">Cancelar</button>
        <button class="btn-blue btn-first">Diagrama Topológico</button>
        <button class="btn-blue">Imprimir</button>
        <button class="btn-blue">Confirmar</button>
      </footer>
      <div class="status">
        <span class="st-a">WGS84 - Lon: -44.00768, Lat: -19.88063</span>
        <span class="st-b">Itens selecionados: 0</span>
        <span>Escala = 1 : 1128 Metros</span>
      </div>
      <div class="strip"></div>

      <div class="w10">
        <span class="w10-start"><svg><use href="#w-logo"/></svg></span>
        <div class="w10-search"><svg><use href="#w-glass"/></svg><span>Digite aqui para pesquisar</span></div>
        <span class="w10-app w10-wide"><svg><use href="#w-cortana"/></svg></span>
        <span class="w10-app w10-wide"><svg><use href="#w-task"/></svg></span>
        <span class="w10-app w10-open"><svg><use href="#w-edge"/></svg></span>
        <span class="w10-app w10-open"><svg><use href="#w-files"/></svg></span>
        <span class="w10-app"><svg><use href="#w-globe2"/></svg></span>
        <span class="w10-app"><svg><use href="#w-nx"/></svg></span>
        <span class="w10-app w10-hot"><svg><use href="#w-outlook"/></svg></span>
        <span class="w10-app w10-on w10-open"><svg><use href="#w-chrome"/></svg></span>
        <span class="w10-app w10-hot"><svg><use href="#w-chat"/></svg></span>
        <span class="w10-app w10-open"><svg><use href="#i-teams"/></svg></span>
        <span class="w10-app"><svg><use href="#w-qgis"/></svg></span>
        <div class="w10-scroll"><svg viewBox="0 0 16 16"><path d="M3 10l5-5 5 5" fill="none" stroke="#444" stroke-width="1.5"/></svg><svg viewBox="0 0 16 16"><path d="M3 6l5 5 5-5" fill="none" stroke="#444" stroke-width="1.5"/></svg></div>
        <span class="w10-weather"><svg><use href="#w-cloud"/></svg></span>
        <span class="w10-temp">28°C</span>
        <span class="w10-tray"><svg><use href="#w-caret"/></svg></span>
        <span class="w10-tray"><svg><use href="#w-mic"/></svg></span>
        <span class="w10-tray"><svg><use href="#w-sync"/></svg></span>
        <span class="w10-tray"><svg><use href="#w-power"/></svg></span>
        <span class="w10-tray"><svg><use href="#w-vol"/></svg></span>
        <span class="w10-tray"><svg><use href="#w-dim"/></svg></span>
        <div class="w10-lang"><span>POR</span><span>PTB2</span></div>
        <div class="w10-clock"><span>11:38</span><span>15/03/2022</span></div>
        <span class="w10-note"><svg><use href="#w-note"/></svg></span>
      </div>
    </div>
  </div>

  <div class="band">
    <div class="tile-am"><span class="am-ring">ÁM</span></div>
    <div class="tile-obs">
      <svg class="obs-logo" viewBox="0 0 40 40"><circle cx="20" cy="20" r="18" fill="#1c1c24" stroke="#eee" stroke-width="2"/><circle cx="20" cy="11" r="6" fill="none" stroke="#eee" stroke-width="2.5"/><circle cx="12" cy="25" r="6" fill="none" stroke="#eee" stroke-width="2.5"/><circle cx="28" cy="25" r="6" fill="none" stroke="#eee" stroke-width="2.5"/></svg>
      <svg class="obs-mute" viewBox="0 0 20 20"><rect x="3" y="4" width="13" height="9" fill="#bbb"/><path d="M2 18L18 2" stroke="#1b2340" stroke-width="3"/><path d="M2 18L18 2" stroke="#ddd"/></svg>
    </div>
  </div>

  <div class="w11">
    <div class="w11-apps">
      <span class="app"><svg><use href="#a-start"/></svg></span>
      <span class="app"><svg><use href="#w-edge"/></svg></span>
      <span class="app"><svg><use href="#a-um"/></svg></span>
      <span class="app app-run"><svg><use href="#a-cmdc"/></svg></span>
      <span class="app"><svg><use href="#a-wbox"/></svg></span>
      <span class="app"><svg><use href="#w-files"/></svg></span>
      <span class="app app-on"><svg><use href="#w-chrome"/></svg></span>
      <span class="app app-run"><svg><use href="#a-spot"/></svg></span>
      <span class="app app-run"><svg><use href="#a-notes"/></svg></span>
      <span class="app app-run"><svg><use href="#i-putty"/></svg></span>
      <span class="app app-run"><svg><use href="#a-wapp"/></svg><b class="app-badge">24</b></span>
      <span class="app app-run"><svg><use href="#a-term"/></svg></span>
      <span class="app app-run"><svg><use href="#a-vscode"/></svg></span>
      <span class="app app-run"><svg><use href="#a-mysql"/></svg></span>
      <span class="app app-run"><svg><use href="#a-chart"/></svg></span>
      <span class="app app-run"><svg><use href="#a-paint"/></svg></span>
    </div>
    <div class="w11-tray">
      <svg class="t-caret"><use href="#w-caret"/></svg>
      <svg class="t-cloud"><use href="#a-cloud"/></svg>
      <svg class="t-mic"><use href="#a-mic"/></svg>
      <svg class="t-wifi"><use href="#w-wifi"/></svg>
      <svg class="t-vol"><use href="#w-vol"/></svg>
      <div class="w11-clock"><span>11:38</span><span>15/03/2022</span></div>
      <span class="w11-badge">9</span>
    </div>
  </div>
</body>
</html>
```

FILE: styles.css
```css
* {
  box-sizing: border-box;
}

body {
  margin: 0;
  width: 1920px;
  height: 1080px;
  overflow: hidden;
  display: flex;
  flex-direction: column;
  font-family: "Liberation Sans", Arial, sans-serif;
  background-color: #000;
}

svg {
  display: block;
}

.sprite {
  display: none;
}

.port-defs {
  position: absolute;
  width: 0;
  height: 0;
}

.ico {
  width: 16px;
  height: 16px;
  flex: none;
}

button {
  font-family: inherit;
  cursor: default;
}

/* chrome de fora */
.tabs {
  height: 34px;
  flex: none;
  display: flex;
  align-items: flex-end;
  padding-left: 9px;
  background-color: #dee1e6;
}

.tab {
  width: 235px;
  height: 34px;
  flex: none;
  display: flex;
  align-items: center;
  padding: 0 8px 0 10px;
  font-size: 11.5px;
  color: #444;
  position: relative;
}

.tab::after {
  content: "";
  position: absolute;
  right: 0;
  top: 8px;
  bottom: 8px;
  width: 1px;
  background-color: #9a9ea5;
}

.tab-last::after,
.tab-on::after {
  display: none;
}

.tab-on {
  width: 236px;
  margin-left: -2px;
  padding: 0 10px 0 12px;
  background-color: #fff;
  border-radius: 8px 8px 0 0;
}

.tab-title {
  flex: 1;
  margin-left: 9px;
  overflow: hidden;
  white-space: nowrap;
}

.tab-x {
  width: 13px;
  height: 13px;
  flex: none;
  margin-left: 8px;
  color: #333;
}

.tab-rec {
  width: 13px;
  height: 13px;
}

.tab-plus {
  width: 38px;
  text-align: center;
  font-size: 22px;
  line-height: 32px;
  color: #333;
}

.win-ctl {
  margin-left: auto;
  height: 34px;
  display: flex;
  align-items: center;
  gap: 32px;
  padding-right: 15px;
}

.win-ctl svg {
  width: 15px;
  height: 15px;
}

.toolbar {
  height: 36px;
  flex: none;
  display: flex;
  align-items: center;
  padding-left: 5px;
  background-color: #fff;
}

.nav-btn {
  width: 32px;
  height: 28px;
  flex: none;
  display: flex;
  align-items: center;
  justify-content: center;
  color: #555;
}

.nav-btn svg {
  width: 16px;
  height: 16px;
}

.nav-off {
  color: #b5b8bc;
}

.omni {
  width: 1510px;
  height: 28px;
  margin-left: 9px;
  display: flex;
  align-items: center;
  padding: 0 2px 0 10px;
  border-radius: 14px;
  background-color: #f1f3f4;
}

.omni-lock {
  width: 13px;
  height: 13px;
  color: #444;
}

.omni-url {
  flex: 1;
  margin-left: 9px;
  font-size: 13.9px;
  color: #222;
  white-space: nowrap;
}

.ext-list {
  display: flex;
  margin-left: 5px;
}

.avatar-photo {
  width: 22px;
  height: 22px;
  border-radius: 50%;
  background: radial-gradient(circle at 50% 40%, #e2c7a4 0 5px, #8a7a5a 6px 8px, #5d6b4b 9px);
}

.bookmarks {
  height: 32px;
  flex: none;
  display: flex;
  align-items: center;
  gap: 16.3px;
  padding: 0 0 4px 12px;
  font-family: "Open Sans", "Liberation Sans", sans-serif;
  font-size: 11.5px;
  color: #333;
  background-color: #fff;
  border-bottom: 1px solid #e3e3e3;
}

.bm {
  display: flex;
  align-items: center;
  gap: 8px;
  white-space: nowrap;
}

.bm-apps {
  gap: 10px;
}

.bm-more {
  margin-left: auto;
  width: 23px;
  font-size: 16px;
  line-height: 16px;
  color: #555;
  border-right: 1px solid #ccc;
}

.bm-list {
  margin-right: 14px;
}

/* janela de dentro */
.desk {
  height: 836px;
  flex: none;
  padding-left: 218px;
  background-color: #000;
}

.window {
  width: 1484px;
  height: 836px;
  display: flex;
  flex-direction: column;
  background-color: #fff;
}

.wtabs {
  height: 40px;
  flex: none;
  display: flex;
  align-items: flex-end;
  padding-left: 9px;
  background-color: #dee1e6;
}

.wtab {
  width: 279px;
  height: 38px;
  display: flex;
  align-items: center;
  padding: 0 12px 0 14px;
  font-size: 13.5px;
  color: #444;
  border-radius: 9px 9px 0 0;
  background-color: #fff;
}

.wtab-title {
  flex: 1;
  margin-left: 10px;
}

.wtab-x {
  width: 14px;
  height: 14px;
  color: #333;
}

.wtab-plus {
  width: 48px;
  text-align: center;
  font-size: 26px;
  line-height: 38px;
  color: #333;
}

.win-ctl-in {
  height: 38px;
  gap: 38px;
  padding-right: 19px;
}

.wbar {
  height: 44px;
  flex: none;
  display: flex;
  align-items: center;
  padding-left: 6px;
  background-color: #fff;
}

.wnav {
  width: 37.5px;
  height: 32px;
  flex: none;
  display: flex;
  align-items: center;
  justify-content: center;
  color: #555;
}

.wnav svg {
  width: 18px;
  height: 18px;
}

.wnav-off {
  color: #b5b8bc;
}

.wnav-dark {
  color: #333;
}

.womni {
  width: 1233px;
  height: 32px;
  margin: 0 6px 0 7px;
  display: flex;
  align-items: center;
  padding: 0 2px 0 12px;
  border-radius: 16px;
  background-color: #f1f3f4;
}

.womni-lock {
  width: 14px;
  height: 14px;
  color: #444;
}

.womni-url {
  flex: 1;
  margin-left: 12px;
  font-family: Roboto, "Liberation Sans", sans-serif;
  font-size: 16px;
  color: #222;
}

.womni-path {
  color: #5f6368;
}

.avatar {
  width: 25px;
  height: 25px;
  border-radius: 50%;
  text-align: center;
  font-size: 13px;
  line-height: 25px;
  color: #dce4e8;
  background-color: #33505f;
}

/* sistema */
.app-head {
  height: 37px;
  flex: none;
  display: flex;
  align-items: center;
  padding: 0 0 1px 13px;
  background-color: #533e78;
}

.burger {
  width: 14px;
  height: 11px;
  border-top: 2px solid #fff;
  border-bottom: 2px solid #fff;
  position: relative;
}

.burger::after {
  content: "";
  position: absolute;
  left: 0;
  right: 0;
  top: 2.5px;
  height: 2px;
  background-color: #fff;
}

.logo {
  margin: -6px 0 0 25px;
  width: 92px;
  font-family: Lato, "Liberation Sans", sans-serif;
  font-weight: 300;
  font-size: 33px;
  line-height: 30px;
  letter-spacing: -1.3px;
  color: #cfc8dc;
}

.logo-sub {
  width: 52px;
  height: 16px;
  padding-left: 4px;
  font-size: 8px;
  font-weight: 700;
  line-height: 16px;
  color: #e8e4f0;
  border-left: 1px solid #8a7da3;
}

.head-btn {
  height: 26px;
  margin-right: 5px;
  padding: 0 9px;
  font-size: 11px;
  color: #d6d0e2;
  border: 1px solid #8a7ca6;
  border-radius: 3px;
  background-color: #5d4a82;
}

.head-btn-on {
  width: 115px;
  padding: 0;
  white-space: nowrap;
  color: #c9c3d6;
  background-color: #7f6e9e;
}

.head-menu {
  margin-left: auto;
  margin-right: 5px;
  height: 26px;
  display: flex;
  border-radius: 2px;
  overflow: hidden;
  background-color: #fff;
  font-size: 11.2px;
  color: #555;
}

.hm {
  display: flex;
  align-items: center;
  padding: 0 9.5px;
  white-space: nowrap;
  border-left: 1px solid #ddd;
}

.hm-user {
  padding: 0 10px;
  border-left: 0;
  background-color: #bfb7d0;
}

.hm-bell {
  padding: 0 11px;
  color: #777;
}

.hm-bell .ico,
.hm-tut .ico {
  width: 15px;
  height: 15px;
}

.hm-tut {
  gap: 2px;
  padding: 0 9px;
}

.hm-caret {
  padding: 0 9px;
}

.caret {
  display: inline-block;
  width: 0;
  height: 0;
  border-left: 3.5px solid transparent;
  border-right: 3.5px solid transparent;
  border-top: 4px solid #444;
}

.tools {
  height: 31px;
  flex: none;
  display: flex;
  align-items: center;
  padding-left: 2px;
  background-color: #fff;
  border-bottom: 2px solid #c9c5d3;
}

.tool {
  width: 25px;
  height: 24px;
  flex: none;
  display: flex;
  align-items: center;
  justify-content: center;
}

.tool svg {
  width: 19px;
  height: 19px;
}

.tool-on {
  background-color: #e4e8ee;
  border-radius: 2px;
}

.tool-sep {
  width: 3px;
  height: 20px;
  flex: none;
  border-left: 1px solid #e2e2e2;
}

.tool-sep-w {
  width: 5px;
}

.project {
  width: 185px;
  height: 20px;
  margin-left: 5px;
  display: flex;
  align-items: center;
  justify-content: space-between;
  padding: 0 6px 0 7px;
  font-size: 10.5px;
  font-weight: 700;
  letter-spacing: 0.3px;
  color: #5d5030;
  border: 0;
  border-radius: 2px;
  background-color: #ffb400;
}

.finder {
  margin: 1px 4px 0 auto;
  width: 324px;
  height: 21px;
  display: flex;
  align-items: center;
  font-size: 11px;
  color: #777;
  border: 1px solid #e6e6e6;
  border-radius: 2px;
}

.finder-pin {
  width: 43px;
  height: 19px;
  display: flex;
  align-items: center;
  justify-content: center;
  gap: 2px;
  color: #222;
  border-right: 1px solid #e2e2e2;
}

.finder-pin .ico {
  width: 14px;
  height: 14px;
}

.finder-text {
  flex: 1;
  padding-left: 10px;
  white-space: nowrap;
}

.finder-go {
  width: 38px;
  height: 21px;
  margin-right: -1px;
  display: flex;
  align-items: center;
  justify-content: center;
  color: #fff;
  background-color: #2a72b8;
  border-radius: 2px;
}

.titlebar {
  height: 27px;
  flex: none;
  display: flex;
  align-items: center;
  justify-content: space-between;
  padding: 0 9px 0 10px;
  font-size: 12.3px;
  color: #fff;
  background-color: #563b83;
}

.titlebar-ctl {
  display: flex;
  gap: 12px;
}

.titlebar-ctl svg {
  width: 10px;
  height: 10px;
}

/* area do diagrama */
.pane {
  height: 544px;
  flex: none;
  display: grid;
  grid-template-columns: 1fr 18px;
  grid-template-rows: 1fr 18px;
}

.canvas {
  position: relative;
  overflow: hidden;
  background-color: #dcdcdf;
  background-image:
    linear-gradient(#f3f3f5 1px, transparent 1px),
    linear-gradient(90deg, #f3f3f5 1px, transparent 1px),
    linear-gradient(#eeeef0 1px, transparent 1px),
    linear-gradient(90deg, #eeeef0 1px, transparent 1px);
  background-size: 60px 60px, 60px 60px, 12px 12px, 12px 12px;
}

.rack {
  position: absolute;
  display: flex;
  flex-direction: column;
  gap: 9px;
  padding: 2px 5px 2px 2px;
  background-color: #e0e0e2;
  border: 2px solid #8c8c8c;
}

.rack-left {
  left: 38px;
  top: -42px;
  width: 216px;
}

.rack-right {
  left: 815px;
  top: 47px;
  width: 381px;
  padding-top: 3px;
  padding-right: 4px;
  border-color: #777;
  border-radius: 4px;
}

.rack-title {
  height: 27px;
  flex: none;
  padding-left: 7px;
  font-size: 11px;
  line-height: 27px;
  color: #fff;
  border-radius: 3px;
  background-color: #5b9aa8;
}

.unit {
  height: 45px;
  flex: none;
  display: flex;
  gap: 9px;
  padding: 5px;
  background-color: #f6f5f9;
  border: 2px solid #a9a9a9;
}

.unit-dwdm {
  height: 57px;
}

.unit-dgo {
  height: 72px;
}

.unit-olt {
  height: 141px;
}

.ctl {
  width: 15px;
  flex: none;
  display: flex;
  flex-direction: column;
  gap: 1px;
}

.btn-add,
.btn-del {
  width: 15px;
  height: 15px;
  flex: none;
  border-radius: 50%;
  position: relative;
  background-color: #1c7cc0;
}

.btn-del {
  background-color: #cf3430;
}

.btn-add::before,
.btn-del::before {
  content: "";
  position: absolute;
  left: 3px;
  right: 3px;
  top: 6px;
  height: 3px;
  background-color: #fff;
}

.btn-add::after {
  content: "";
  position: absolute;
  top: 3px;
  bottom: 3px;
  left: 6px;
  width: 3px;
  background-color: #fff;
}

.card {
  flex: none;
  padding-top: 3px;
  border-radius: 2px;
  background-color: #c3c3c3;
}

/* fica por cima dos cabos */
.card-glass {
  position: relative;
  z-index: 3;
  width: 168px;
  background-color: rgba(161, 161, 161, 0.6);
}

.card-dgo {
  width: 333px;
}

.ports-dgo {
  margin-left: -1px;
}

.card-a {
  width: 155px;
  height: 127px;
}

.card-b {
  width: 119px;
  height: 127px;
}

.card-c {
  width: 67px;
  height: 127px;
}

.card-d {
  width: 160px;
  height: 127px;
}

.card-label {
  height: 12px;
  padding-left: 4px;
  font-size: 11px;
  line-height: 12px;
  white-space: nowrap;
  color: #444;
}

.dio {
  position: absolute;
  left: 354px;
  top: 411px;
  width: 55px;
  display: flex;
}

.dio-name {
  width: 22px;
  height: 120px;
  background-color: #777;
  font-size: 11px;
  color: #2a2a2a;
}

.dio-name span {
  display: block;
  margin: 87px 0 0 9px;
  writing-mode: vertical-rl;
  transform: rotate(180deg);
}

.dio-rows {
  flex: 1;
}

.dio-row {
  height: 12px;
  display: flex;
  align-items: center;
}

.dio-num {
  width: 19px;
  height: 12px;
  flex: none;
  padding-left: 4px;
  font-size: 9px;
  line-height: 12px;
  color: #144a2a;
  background-color: #16a058;
}

.dio-row-y .dio-num {
  color: #5a5a10;
  background-color: #f7ec10;
}

.conn {
  width: 13px;
  height: 6px;
  flex: none;
  margin-left: -4px;
  border: 1px solid rgba(0, 0, 0, 0.6);
}

.c-green {
  background-color: #1d8a50;
}

.c-yellow {
  background-color: #f5e32a;
}

.c-white {
  background-color: #fff;
}

.c-blue {
  background-color: #1f9be0;
}

.c-red {
  background-color: #e02020;
}

.c-purple {
  background-color: #6a35a0;
}

.conn-dot {
  width: 7px;
  height: 7px;
  flex: none;
  margin-left: -2px;
  position: relative;
  z-index: 1;
  border-radius: 50%;
  background-color: #5b6b74;
  border: 1px solid #222;
}

.wires {
  position: absolute;
  left: 0;
  top: 0;
  width: 1466px;
  height: 526px;
  z-index: 2;
  pointer-events: none;
}

.tip {
  position: absolute;
  left: 700px;
  top: 418px;
  width: 319px;
  height: 103px;
  z-index: 5;
  padding: 4px 5px;
  font-size: 11px;
  line-height: 16px;
  white-space: nowrap;
  color: #444;
  background-color: #fffbc8;
  box-shadow: 0 1px 2px rgba(0, 0, 0, 0.25);
}

.cursor {
  position: absolute;
  left: 843px;
  top: 388px;
  width: 28px;
  height: 28px;
  z-index: 6;
}

.vbar,
.hbar {
  background-color: #f1f1f1;
  display: flex;
  align-items: center;
}

.vbar {
  flex-direction: column;
}

.hbar {
  padding-right: 2px;
}

.corner {
  background-color: #dcdcdc;
}

.arr {
  flex: none;
  width: 0;
  height: 0;
  border-style: solid;
  border-color: transparent;
}

.arr-up {
  margin-top: 7px;
  border-width: 0 4px 5px;
  border-bottom-color: #333;
}

.arr-down {
  margin-top: auto;
  margin-bottom: 7px;
  border-width: 5px 4px 0;
  border-top-color: #333;
}

.arr-left {
  margin-left: 7px;
  border-width: 4px 5px 4px 0;
  border-right-color: #888;
}

.arr-right {
  margin-left: auto;
  margin-right: 7px;
  border-width: 4px 0 4px 5px;
  border-left-color: #333;
}

.vthumb {
  width: 17px;
  height: 55px;
  margin-top: 44px;
  background-color: #c1c1c1;
}

.hthumb {
  width: 449px;
  height: 17px;
  margin-left: 8px;
  background-color: #c1c1c1;
}

.foot {
  height: 48px;
  flex: none;
  display: flex;
  align-items: center;
  gap: 14px;
  padding: 0 20px 0 16px;
  background-color: #f6f6f9;
  border-bottom: 2px solid #a8a8a8;
}

.btn-cancel {
  width: 62px;
  height: 28px;
  margin-top: 1px;
  font-size: 11px;
  color: #333;
  border: 2px solid #222;
  outline: 1px solid #888;
  border-radius: 3px;
  background-color: #efefef;
}

.btn-blue {
  height: 28px;
  margin-top: 1px;
  padding: 0 10px;
  font-size: 11px;
  color: #f2f6fa;
  border: 1px solid #2a6aa8;
  border-radius: 2px;
  background-color: #2b73b9;
}

.btn-first {
  margin-left: auto;
}

.status {
  height: 19px;
  flex: none;
  display: flex;
  align-items: center;
  padding-left: 6px;
  font-size: 8.5px;
  color: #555;
  background-color: #f8f8fb;
}

.st-a {
  width: 178px;
}

.st-b {
  width: 107px;
}

.strip {
  height: 8px;
  flex: none;
  background-color: #eeeeee;
}

/* barra do windows gravado */
.w10 {
  height: 38px;
  flex: none;
  display: flex;
  align-items: center;
  color: #f0e6e6;
  background-color: #47181a;
  border-top: 1px solid #e07a70;
}

/* a barra esta cortada embaixo, o conteudo fica mais para cima */
.w10-start,
.w10-search,
.w10-app,
.w10-weather,
.w10-temp,
.w10-tray,
.w10-note {
  height: 37px;
  padding-bottom: 6px;
  display: flex;
  align-items: center;
}

.w10-start {
  width: 56px;
  flex: none;
  justify-content: center;
  color: #fff;
}

.w10-start svg {
  width: 19px;
  height: 19px;
}

.w10-search {
  width: 398px;
  flex: none;
  padding-left: 13px;
  gap: 14px;
  font-family: "Noto Sans", sans-serif;
  font-size: 17px;
  color: #333;
  background-color: #f4f4f4;
}

.w10-search svg {
  width: 20px;
  height: 20px;
}

.w10-app {
  width: 47px;
  flex: none;
  justify-content: center;
}

.w10-app svg {
  width: 26px;
  height: 26px;
}

.w10-wide {
  width: 57px;
}

.w10-open {
  box-shadow: inset 0 -2px 0 #7da6d0;
}

.w10-hot {
  background-color: #c46a22;
}

.w10-on {
  background-color: #5a3a3a;
}

.w10-scroll {
  width: 20px;
  height: 37px;
  margin-left: 3px;
  flex: none;
  display: flex;
  flex-direction: column;
  justify-content: space-between;
  background-color: #f2f2f2;
}

.w10-scroll svg {
  width: 20px;
  height: 16px;
}

.w10-weather {
  margin-left: 28px;
}

.w10-weather svg {
  width: 25px;
  height: 27px;
}

.w10-temp {
  width: 47px;
  margin-left: 11px;
  font-size: 16px;
}

.w10-tray {
  width: 28px;
  flex: none;
  justify-content: center;
}

.w10-tray svg {
  width: 20px;
  height: 20px;
}

.w10-lang,
.w10-clock {
  height: 37px;
  flex: none;
  display: flex;
  flex-direction: column;
  align-items: center;
  justify-content: space-between;
  font-size: 14px;
  line-height: 16px;
  overflow: hidden;
}

.w10-lang span:first-child,
.w10-clock span:first-child {
  margin-top: -3px;
}

.w10-lang span:last-child,
.w10-clock span:last-child {
  margin-bottom: 2px;
}

.w10-lang {
  width: 40px;
}

.w10-clock {
  width: 90px;
}

.w10-note {
  margin-left: 12px;
}

.w10-note svg {
  width: 20px;
  height: 24px;
}

/* faixa da chamada */
.band {
  height: 94px;
  flex: none;
  display: flex;
  justify-content: flex-end;
  gap: 7px;
  background-color: #1a1a1a;
}

.tile-am {
  width: 180px;
  display: flex;
  align-items: center;
  justify-content: center;
  background: radial-gradient(circle at center, #55556f 0, #3b3b4a 55%, #33333f 100%);
}

.am-ring {
  width: 54px;
  height: 54px;
  display: flex;
  align-items: center;
  justify-content: center;
  font-size: 18px;
  color: #444;
  border-radius: 50%;
  border: 4px solid #8d92e6;
  background-color: #e8e6f1;
}

.tile-obs {
  width: 173px;
  display: flex;
  flex-direction: column;
  align-items: center;
  padding-top: 15px;
  gap: 14px;
  background: linear-gradient(168deg, #1e2f66 0 42%, #16203f 42.5% 100%);
}

.obs-logo {
  width: 38px;
  height: 38px;
}

.obs-mute {
  width: 16px;
  height: 16px;
}

/* barra do windows 11 */
.w11 {
  height: 48px;
  flex: none;
  display: flex;
  align-items: center;
  padding-left: 609px;
  background: linear-gradient(90deg, #dbe6f5, #d8e0f2 50%, #e2ebf5);
}

.w11-apps {
  display: flex;
}

.app {
  width: 44px;
  height: 44px;
  flex: none;
  display: flex;
  align-items: center;
  justify-content: center;
  position: relative;
}

.app svg {
  width: 24px;
  height: 24px;
}

.app-run::after,
.app-on::after {
  content: "";
  position: absolute;
  left: 20px;
  bottom: 1px;
  width: 5px;
  height: 3px;
  border-radius: 2px;
  background-color: #777;
}

.app-on {
  border-radius: 4px;
  background-color: #eaf0fa;
}

.app-on::after {
  left: 14px;
  width: 16px;
  background-color: #0067c0;
}

.app-badge {
  position: absolute;
  left: 22px;
  top: 0;
  width: 17px;
  height: 17px;
  font-size: 10px;
  font-weight: 400;
  line-height: 17px;
  text-align: center;
  color: #fff;
  border-radius: 50%;
  background-color: #d8202a;
}

.w11-tray {
  margin-left: auto;
  height: 48px;
  display: flex;
  align-items: center;
  padding-right: 20px;
  color: #222;
}

.t-caret {
  width: 16px;
  height: 16px;
  margin-right: 7px;
}

.t-cloud {
  width: 20px;
  height: 20px;
  margin-right: 8px;
}

.t-mic {
  width: 18px;
  height: 18px;
  margin-right: 14px;
}

.t-wifi {
  width: 18px;
  height: 18px;
  margin-right: 8px;
}

.t-vol {
  width: 18px;
  height: 18px;
  margin-right: 12px;
}

.w11-clock {
  display: flex;
  flex-direction: column;
  align-items: flex-end;
  font-family: "Noto Sans", sans-serif;
  font-size: 11.3px;
  line-height: 16px;
  color: #1a1a1a;
}

.w11-badge {
  width: 16px;
  height: 16px;
  margin-left: 8px;
  font-size: 10px;
  font-weight: 700;
  line-height: 16px;
  text-align: center;
  color: #fff;
  border-radius: 50%;
  background-color: #0067c0;
}
```
